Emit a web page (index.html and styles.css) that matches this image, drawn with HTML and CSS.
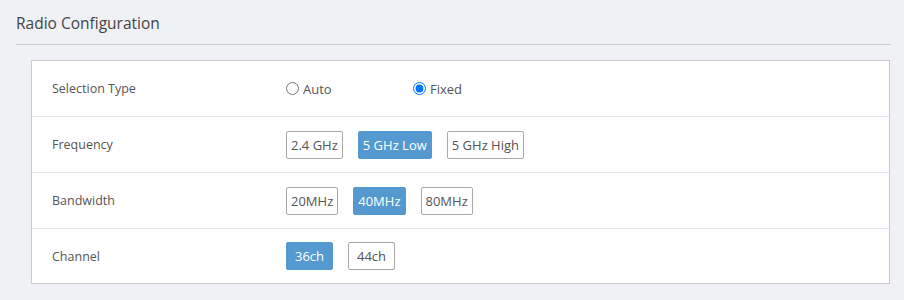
FILE: index.html
```html
<!DOCTYPE html>
<html>
<head>
    <meta charset="UTF-8">
    <link rel="stylesheet" href="styles.css">
</head>
<body>
    <div class="page">
        <h2 class="section-title">Radio Configuration</h2>

        <div class="config-card">
            <div class="config-row">
                <div class="config-label">Selection Type</div>
                <div class="config-value">
                    <label class="radio-item"><input type="radio" name="seltype"> Auto</label>
                    <label class="radio-item"><input type="radio" name="seltype" checked> Fixed</label>
                </div>
            </div>
            <div class="config-row">
                <div class="config-label">Frequency</div>
                <div class="config-value">
                    <button class="opt-btn">2.4 GHz</button>
                    <button class="opt-btn active">5 GHz Low</button>
                    <button class="opt-btn">5 GHz High</button>
                </div>
            </div>
            <div class="config-row">
                <div class="config-label">Bandwidth</div>
                <div class="config-value">
                    <button class="opt-btn">20MHz</button>
                    <button class="opt-btn active">40MHz</button>
                    <button class="opt-btn">80MHz</button>
                </div>
            </div>
            <div class="config-row">
                <div class="config-label">Channel</div>
                <div class="config-value">
                    <button class="opt-btn active">36ch</button>
                    <button class="opt-btn">44ch</button>
                </div>
            </div>
        </div>
    </div>
</body>
</html>
```

FILE: styles.css
```css
body {
    margin: 0;
    background-color: #f0f1f5;
    font-family: "Open Sans", "Noto Sans", Arial, sans-serif;
    color: #555;
}

.page {
    padding: 0 13px 0 16px;
}

.section-title {
    margin: 0;
    padding: 12px 0 10px;
    font-size: 15.5px;
    font-weight: normal;
    color: #444;
    border-bottom: 1px solid #c9cbd0;
}

.config-card {
    margin: 15px 1px 0 15px;
    background-color: #fff;
    border: 1px solid #c9cbd0;
}

.config-row {
    display: flex;
    align-items: center;
    height: 55px;
    border-top: 1px solid #e2e5ea;
}

.config-row:first-child {
    border-top: none;
}

.config-row:last-child {
    height: 54px;
}

.config-label {
    width: 234px;
    padding-left: 20px;
    font-size: 12.5px;
    color: #555;
}

.config-value {
    display: flex;
    align-items: center;
    gap: 15px;
}

/* 單選按鈕 */
.radio-item {
    display: flex;
    align-items: center;
    width: 112px;
    font-size: 13px;
    color: #555;
}

.radio-item input {
    margin: 0 4px 0 0;
    width: 13px;
    height: 13px;
}

/* 選項按鈕 */
.opt-btn {
    min-width: 47px;
    height: 28px;
    padding: 0 4px;
    background: #fff;
    border: 1px solid #a9a9a9;
    border-radius: 2px;
    font-family: inherit;
    font-size: 13px;
    color: #555;
    cursor: pointer;
}

.opt-btn.active {
    background-color: #5499d0;
    border-color: #5499d0;
    color: #fff;
}
```
